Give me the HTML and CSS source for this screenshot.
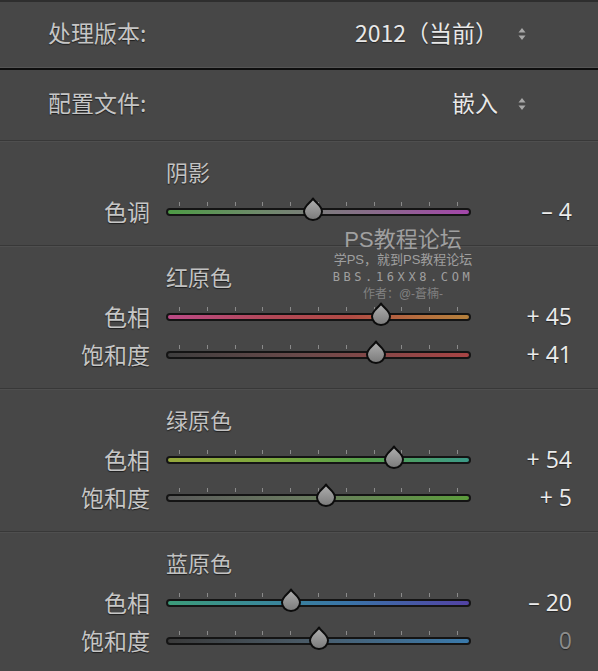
FILE: index.html
```html
<!DOCTYPE html>
<html lang="zh-CN">
<head>
    <meta charset="UTF-8">
    <meta name="viewport" content="width=device-width, initial-scale=1.0">
    <title>相机校准</title>
    <link rel="stylesheet" href="styles.css">
</head>
<body>

    <div class="panel">
        <!-- Process version / profile pickers -->
        <div class="setting-row first">
            <span class="setting-label">处理版本:</span>
            <span class="setting-value">2012（当前）</span>
            <svg class="updown" width="8" height="14" viewBox="0 0 8 14"><path d="M4 1 L7.5 5.5 H0.5 Z M4 13 L7.5 8.5 H0.5 Z"/></svg>
        </div>
        <div class="setting-row">
            <span class="setting-label">配置文件:</span>
            <span class="setting-value">嵌入</span>
            <svg class="updown" width="8" height="14" viewBox="0 0 8 14"><path d="M4 1 L7.5 5.5 H0.5 Z M4 13 L7.5 8.5 H0.5 Z"/></svg>
        </div>

        <!-- Shadows -->
        <div class="group">
            <div class="group-title">阴影</div>
            <div class="slider-row">
                <span class="slider-label">色调</span>
                <div class="slider">
                    <div class="ticks"><i></i><i></i><i></i><i></i><i></i><i></i><i></i><i></i><i></i><i></i><i></i></div>
                    <div class="track shadow-tint"></div>
                    <svg class="thumb" style="left: 147px" width="22" height="24" viewBox="0 0 22 24"><use href="#drop"/></svg>
                </div>
                <span class="slider-value">– 4</span>
            </div>
        </div>

        <!-- Red primary -->
        <div class="group">
            <div class="group-title">红原色</div>
            <div class="slider-row">
                <span class="slider-label">色相</span>
                <div class="slider">
                    <div class="ticks"><i></i><i></i><i></i><i></i><i></i><i></i><i></i><i></i><i></i><i></i><i></i></div>
                    <div class="track red-hue"></div>
                    <svg class="thumb" style="left: 215px" width="22" height="24" viewBox="0 0 22 24"><use href="#drop"/></svg>
                </div>
                <span class="slider-value">+ 45</span>
            </div>
            <div class="slider-row">
                <span class="slider-label">饱和度</span>
                <div class="slider">
                    <div class="ticks"><i></i><i></i><i></i><i></i><i></i><i></i><i></i><i></i><i></i><i></i><i></i></div>
                    <div class="track red-sat"></div>
                    <svg class="thumb" style="left: 210px" width="22" height="24" viewBox="0 0 22 24"><use href="#drop"/></svg>
                </div>
                <span class="slider-value">+ 41</span>
            </div>
        </div>

        <!-- Green primary -->
        <div class="group">
            <div class="group-title">绿原色</div>
            <div class="slider-row">
                <span class="slider-label">色相</span>
                <div class="slider">
                    <div class="ticks"><i></i><i></i><i></i><i></i><i></i><i></i><i></i><i></i><i></i><i></i><i></i></div>
                    <div class="track green-hue"></div>
                    <svg class="thumb" style="left: 228px" width="22" height="24" viewBox="0 0 22 24"><use href="#drop"/></svg>
                </div>
                <span class="slider-value">+ 54</span>
            </div>
            <div class="slider-row">
                <span class="slider-label">饱和度</span>
                <div class="slider">
                    <div class="ticks"><i></i><i></i><i></i><i></i><i></i><i></i><i></i><i></i><i></i><i></i><i></i></div>
                    <div class="track green-sat"></div>
                    <svg class="thumb" style="left: 160px" width="22" height="24" viewBox="0 0 22 24"><use href="#drop"/></svg>
                </div>
                <span class="slider-value">+ 5</span>
            </div>
        </div>

        <!-- Blue primary -->
        <div class="group">
            <div class="group-title">蓝原色</div>
            <div class="slider-row">
                <span class="slider-label">色相</span>
                <div class="slider">
                    <div class="ticks"><i></i><i></i><i></i><i></i><i></i><i></i><i></i><i></i><i></i><i></i><i></i></div>
                    <div class="track blue-hue"></div>
                    <svg class="thumb" style="left: 125px" width="22" height="24" viewBox="0 0 22 24"><use href="#drop"/></svg>
                </div>
                <span class="slider-value">– 20</span>
            </div>
            <div class="slider-row">
                <span class="slider-label">饱和度</span>
                <div class="slider">
                    <div class="ticks"><i></i><i></i><i></i><i></i><i></i><i></i><i></i><i></i><i></i><i></i><i></i></div>
                    <div class="track blue-sat"></div>
                    <svg class="thumb" style="left: 153px" width="22" height="24" viewBox="0 0 22 24"><use href="#drop"/></svg>
                </div>
                <span class="slider-value zero">0</span>
            </div>
        </div>

        <!-- Site stamp laid over the panel -->
        <div class="stamp">
            <div class="stamp-big">PS教程论坛</div>
            <div class="stamp-line">学PS，就到PS教程论坛</div>
            <div class="stamp-url">BBS.16XX8.COM</div>
            <div class="stamp-author">作者：@-蒼楠-</div>
        </div>
    </div>

    <!-- Shared slider thumb shape -->
    <svg width="0" height="0" class="defs">
        <defs>
            <linearGradient id="dropFill" x1="0" y1="0" x2="0" y2="1">
                <stop offset="0" stop-color="#b0b0b0"/>
                <stop offset="1" stop-color="#7a7a7a"/>
            </linearGradient>
            <path id="drop" d="M11 1.5 C12.5 5 20 8.5 20 14.5 A9 8.5 0 0 1 2 14.5 C2 8.5 9.5 5 11 1.5 Z" fill="url(#dropFill)" stroke="#0c0c0c" stroke-width="2" stroke-linejoin="round"/>
        </defs>
    </svg>

</body>
</html>
```

FILE: styles.css
```css
body, html {
    margin: 0;
    padding: 0;
    background-color: #474747;
    font-family: "Noto Sans CJK SC", "Noto Sans", sans-serif;
}

.panel {
    width: 598px;
    height: 671px;
    overflow: hidden;
    position: relative;
    background-color: #474747;
}

/* Picker rows at the top */
.setting-row {
    display: flex;
    align-items: center;
    height: 70px;
    padding: 0 72px 7px 48px;
    box-sizing: border-box;
}

.setting-row.first {
    height: 70px;
    padding-bottom: 7px;
    border-top: 2px solid #2e2e2e;
    border-bottom: 2px solid #0e0e0e;
    box-shadow: inset 0 -1px 0 #555;
}

.setting-row .updown {
    margin-top: 4px;
}

.setting-label {
    font-size: 23px;
    color: #c6c6c6;
    text-shadow: 0 1px 1px rgba(0, 0, 0, 0.6);
    flex: 1;
}

.setting-value {
    font-size: 23px;
    color: #e8e8e8;
    text-shadow: 0 1px 1px rgba(0, 0, 0, 0.5);
    margin-right: 20px;
}

.updown {
    fill: #a8a8a8;
}

/* Slider groups */
.group {
    border-top: 1px solid #383838;
    box-shadow: inset 0 1px 0 #4f4f4f;
    padding: 16px 0 14px;
}

.group-title {
    font-size: 22px;
    line-height: 28px;
    color: #c2c2c2;
    text-shadow: 0 1px 1px rgba(0, 0, 0, 0.6);
    margin-left: 166px;
    margin-bottom: 8px;
}

.slider-row {
    display: grid;
    grid-template-columns: 150px 305px 1fr;
    column-gap: 16px;
    align-items: center;
    height: 38px;
    padding-right: 26px;
}

.slider-label {
    font-size: 23px;
    color: #c6c6c6;
    text-shadow: 0 1px 1px rgba(0, 0, 0, 0.6);
    text-align: right;
    margin-top: -3px;
}

.slider-value {
    font-family: "Open Sans", "Liberation Sans", sans-serif;
    font-size: 23px;
    color: #ececec;
    text-align: right;
    text-shadow: 0 1px 1px rgba(0, 0, 0, 0.5);
    margin-top: -2px;
}

.slider-value.zero {
    color: #8c8c8c;
}

.slider {
    position: relative;
    height: 38px;
}

.ticks {
    position: absolute;
    left: 13px;
    right: 13px;
    top: 9px;
    display: flex;
    justify-content: space-between;
}

.ticks i {
    display: block;
    width: 1px;
    height: 4px;
    background-color: #8a8a8a;
}

.track {
    position: absolute;
    left: 0;
    right: 0;
    top: 15px;
    height: 4px;
    border: 2px solid #141414;
    border-radius: 5px;
}

.shadow-tint { background: linear-gradient(to right, #4e9c46, #6e8a6a 30%, #7c7c7c 50%, #8a6a8c 70%, #a446aa); }
.red-hue { background: linear-gradient(to right, #bc4a86, #b24856 35%, #b04a44 60%, #b6703e 85%, #b4803c); }
.red-sat { background: linear-gradient(to right, #3e3e3e, #6a4a4a 45%, #a84444); }
.green-hue { background: linear-gradient(to right, #96a83c, #7ca83e 35%, #56a04a 65%, #3c9a88); }
.green-sat { background: linear-gradient(to right, #5a5a5a, #6a7a60 45%, #5c9c3c); }
.blue-hue { background: linear-gradient(to right, #3c9c7a, #3a8a98 30%, #3a74a8 60%, #5242a4); }
.blue-sat { background: linear-gradient(to right, #3a3a3a, #4a5a66 45%, #3a7aac); }

.thumb {
    position: absolute;
    top: 4px;
    margin-left: -11px;
}

.defs {
    position: absolute;
}

/* Translucent stamp over the middle of the panel */
.stamp {
    position: absolute;
    left: 323px;
    top: 227px;
    width: 160px;
    text-align: center;
    font-family: "Liberation Sans", "Noto Sans CJK SC", sans-serif;
    color: rgba(200, 200, 200, 0.7);
}

.stamp-big {
    font-size: 22px;
    line-height: 25px;
    color: rgba(190, 190, 190, 0.75);
}

.stamp-line {
    font-size: 13px;
    line-height: 15px;
}

.stamp-url {
    font-family: "DejaVu Sans Mono", monospace;
    font-size: 12px;
    line-height: 14px;
    letter-spacing: 3.6px;
    margin-top: 3px;
}

.stamp-author {
    font-size: 12px;
    line-height: 14px;
    margin-top: 3px;
    color: rgba(170, 170, 170, 0.6);
}
```
